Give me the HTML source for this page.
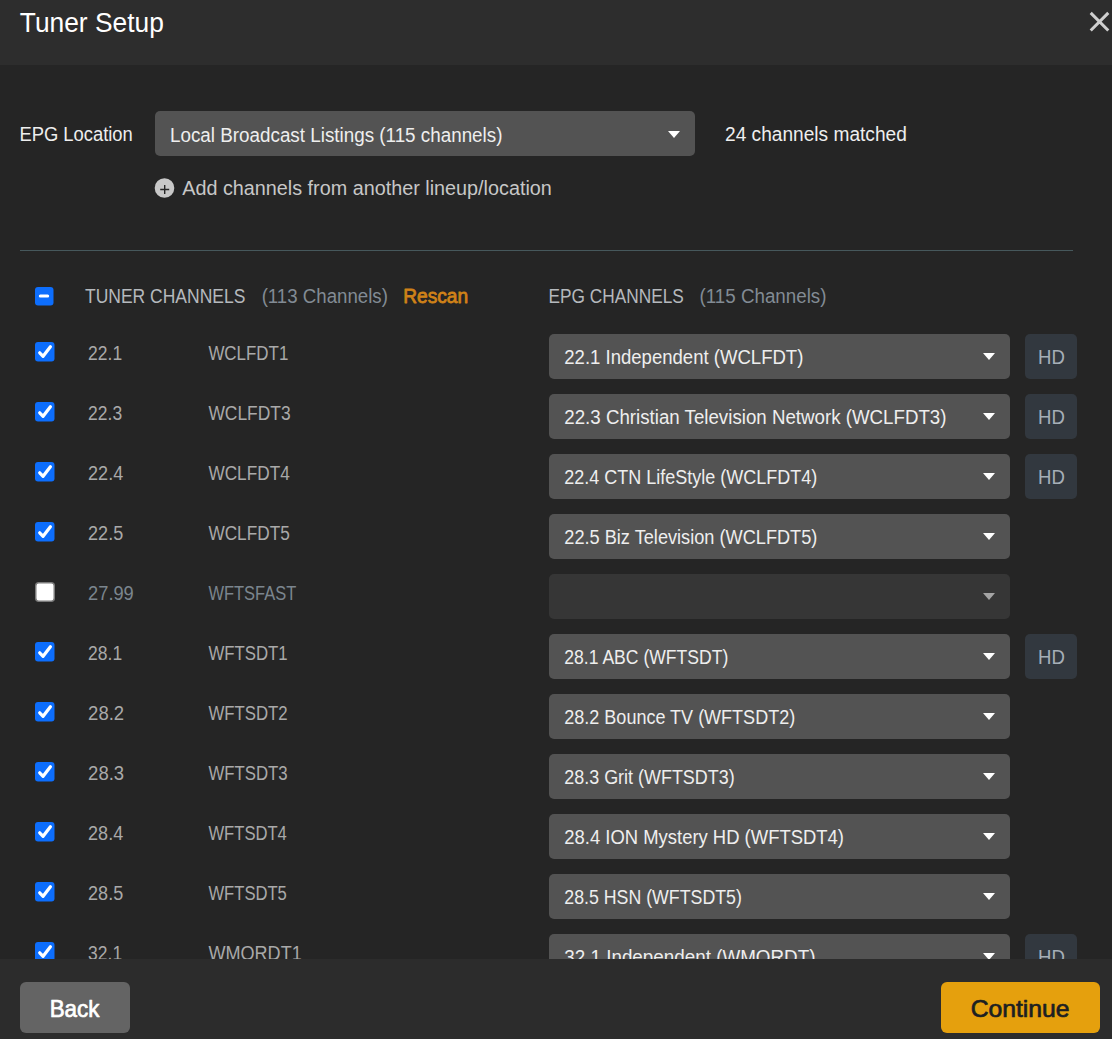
<!DOCTYPE html>
<html><head><meta charset="utf-8"><title>Tuner Setup</title>
<style>
html,body{margin:0;padding:0;background:#252525;width:1112px;height:1039px;overflow:hidden}
svg{display:block;font-family:"Liberation Sans",sans-serif}
</style></head><body>
<svg width="1112" height="1039" viewBox="0 0 1112 1039">
<defs><clipPath id="clipBody"><rect x="0" y="65" width="1112" height="894"/></clipPath></defs>
<rect x="0" y="0" width="1112" height="1039" fill="#252525"/>
<rect x="0" y="0" width="1112" height="65" fill="#2d2d2d"/>
<path d="M1090.7 12.9 L1108.3 30.5 M1108.3 12.9 L1090.7 30.5" stroke="#cfcfcf" stroke-width="3" stroke-linecap="butt"/>
<rect x="155" y="111" width="540" height="45" rx="5" fill="#535353"/>
<path d="M668 131 L680 131 L674 138 Z" fill="#ffffff"/>
<circle cx="164.5" cy="188" r="9.8" fill="#c8c8c8"/>
<path d="M160.2 189.5 H169.2 M164.7 185 V194" stroke="#252525" stroke-width="1.4"/>
<rect x="20" y="250" width="1053" height="1" fill="#46585c"/>
<rect x="35" y="287" width="18.5" height="18.5" rx="3" fill="#0d6efd"/>
<path d="M40.3 296 H47.7" stroke="#fff" stroke-width="3" stroke-linecap="round"/>
<g clip-path="url(#clipBody)">
<rect x="35" y="342" width="19.5" height="19.5" rx="3" fill="#0d6efd"/>
<path d="M39.7 352.8 L43.1 356.3 L50.4 346.7" fill="none" stroke="#fff" stroke-width="3.2" stroke-linecap="round" stroke-linejoin="round"/>
<rect x="549" y="334" width="461" height="45" rx="5" fill="#535353"/>
<path d="M983 353 L995 353 L989 360 Z" fill="#ffffff"/>
<rect x="1025" y="334" width="52" height="45" rx="5" fill="#32383f"/>
<rect x="35" y="402" width="19.5" height="19.5" rx="3" fill="#0d6efd"/>
<path d="M39.7 412.8 L43.1 416.3 L50.4 406.7" fill="none" stroke="#fff" stroke-width="3.2" stroke-linecap="round" stroke-linejoin="round"/>
<rect x="549" y="394" width="461" height="45" rx="5" fill="#535353"/>
<path d="M983 413 L995 413 L989 420 Z" fill="#ffffff"/>
<rect x="1025" y="394" width="52" height="45" rx="5" fill="#32383f"/>
<rect x="35" y="462" width="19.5" height="19.5" rx="3" fill="#0d6efd"/>
<path d="M39.7 472.8 L43.1 476.3 L50.4 466.7" fill="none" stroke="#fff" stroke-width="3.2" stroke-linecap="round" stroke-linejoin="round"/>
<rect x="549" y="454" width="461" height="45" rx="5" fill="#535353"/>
<path d="M983 473 L995 473 L989 480 Z" fill="#ffffff"/>
<rect x="1025" y="454" width="52" height="45" rx="5" fill="#32383f"/>
<rect x="35" y="522" width="19.5" height="19.5" rx="3" fill="#0d6efd"/>
<path d="M39.7 532.8 L43.1 536.3 L50.4 526.7" fill="none" stroke="#fff" stroke-width="3.2" stroke-linecap="round" stroke-linejoin="round"/>
<rect x="549" y="514" width="461" height="45" rx="5" fill="#535353"/>
<path d="M983 533 L995 533 L989 540 Z" fill="#ffffff"/>
<rect x="35.75" y="582.75" width="18.5" height="18.5" rx="3" fill="#ffffff" stroke="#7a7a7a" stroke-width="1.5"/>
<rect x="549" y="574" width="461" height="45" rx="5" fill="#363636"/>
<path d="M983 593 L995 593 L989 600 Z" fill="#a4a4a4"/>
<rect x="35" y="642" width="19.5" height="19.5" rx="3" fill="#0d6efd"/>
<path d="M39.7 652.8 L43.1 656.3 L50.4 646.7" fill="none" stroke="#fff" stroke-width="3.2" stroke-linecap="round" stroke-linejoin="round"/>
<rect x="549" y="634" width="461" height="45" rx="5" fill="#535353"/>
<path d="M983 653 L995 653 L989 660 Z" fill="#ffffff"/>
<rect x="1025" y="634" width="52" height="45" rx="5" fill="#32383f"/>
<rect x="35" y="702" width="19.5" height="19.5" rx="3" fill="#0d6efd"/>
<path d="M39.7 712.8 L43.1 716.3 L50.4 706.7" fill="none" stroke="#fff" stroke-width="3.2" stroke-linecap="round" stroke-linejoin="round"/>
<rect x="549" y="694" width="461" height="45" rx="5" fill="#535353"/>
<path d="M983 713 L995 713 L989 720 Z" fill="#ffffff"/>
<rect x="35" y="762" width="19.5" height="19.5" rx="3" fill="#0d6efd"/>
<path d="M39.7 772.8 L43.1 776.3 L50.4 766.7" fill="none" stroke="#fff" stroke-width="3.2" stroke-linecap="round" stroke-linejoin="round"/>
<rect x="549" y="754" width="461" height="45" rx="5" fill="#535353"/>
<path d="M983 773 L995 773 L989 780 Z" fill="#ffffff"/>
<rect x="35" y="822" width="19.5" height="19.5" rx="3" fill="#0d6efd"/>
<path d="M39.7 832.8 L43.1 836.3 L50.4 826.7" fill="none" stroke="#fff" stroke-width="3.2" stroke-linecap="round" stroke-linejoin="round"/>
<rect x="549" y="814" width="461" height="45" rx="5" fill="#535353"/>
<path d="M983 833 L995 833 L989 840 Z" fill="#ffffff"/>
<rect x="35" y="882" width="19.5" height="19.5" rx="3" fill="#0d6efd"/>
<path d="M39.7 892.8 L43.1 896.3 L50.4 886.7" fill="none" stroke="#fff" stroke-width="3.2" stroke-linecap="round" stroke-linejoin="round"/>
<rect x="549" y="874" width="461" height="45" rx="5" fill="#535353"/>
<path d="M983 893 L995 893 L989 900 Z" fill="#ffffff"/>
<rect x="35" y="942" width="19.5" height="19.5" rx="3" fill="#0d6efd"/>
<path d="M39.7 952.8 L43.1 956.3 L50.4 946.7" fill="none" stroke="#fff" stroke-width="3.2" stroke-linecap="round" stroke-linejoin="round"/>
<rect x="549" y="934" width="461" height="45" rx="5" fill="#535353"/>
<path d="M983 953 L995 953 L989 960 Z" fill="#ffffff"/>
<rect x="1025" y="934" width="52" height="45" rx="5" fill="#32383f"/>
<text x="88.10" y="360" font-size="19.5" font-weight="normal" fill="#a9a9a9" textLength="34.06" lengthAdjust="spacingAndGlyphs">22.1</text>
<text x="208.40" y="360" font-size="19.5" font-weight="normal" fill="#a9a9a9" textLength="79.93" lengthAdjust="spacingAndGlyphs">WCLFDT1</text>
<text x="564.30" y="364" font-size="19.5" font-weight="normal" fill="#eeeeee" textLength="239.07" lengthAdjust="spacingAndGlyphs">22.1 Independent (WCLFDT)</text>
<text x="1038.05" y="364" font-size="19.5" font-weight="normal" fill="#a6afb7" textLength="26.83" lengthAdjust="spacingAndGlyphs">HD</text>
<text x="88.10" y="420" font-size="19.5" font-weight="normal" fill="#a9a9a9" textLength="34.06" lengthAdjust="spacingAndGlyphs">22.3</text>
<text x="208.40" y="420" font-size="19.5" font-weight="normal" fill="#a9a9a9" textLength="82.25" lengthAdjust="spacingAndGlyphs">WCLFDT3</text>
<text x="564.30" y="424" font-size="19.5" font-weight="normal" fill="#eeeeee" textLength="382.17" lengthAdjust="spacingAndGlyphs">22.3 Christian Television Network (WCLFDT3)</text>
<text x="1038.05" y="424" font-size="19.5" font-weight="normal" fill="#a6afb7" textLength="26.83" lengthAdjust="spacingAndGlyphs">HD</text>
<text x="88.10" y="480" font-size="19.5" font-weight="normal" fill="#a9a9a9" textLength="35.06" lengthAdjust="spacingAndGlyphs">22.4</text>
<text x="208.40" y="480" font-size="19.5" font-weight="normal" fill="#a9a9a9" textLength="81.36" lengthAdjust="spacingAndGlyphs">WCLFDT4</text>
<text x="564.30" y="484" font-size="19.5" font-weight="normal" fill="#eeeeee" textLength="253.06" lengthAdjust="spacingAndGlyphs">22.4 CTN LifeStyle (WCLFDT4)</text>
<text x="1038.05" y="484" font-size="19.5" font-weight="normal" fill="#a6afb7" textLength="26.83" lengthAdjust="spacingAndGlyphs">HD</text>
<text x="88.10" y="540" font-size="19.5" font-weight="normal" fill="#a9a9a9" textLength="35.06" lengthAdjust="spacingAndGlyphs">22.5</text>
<text x="208.40" y="540" font-size="19.5" font-weight="normal" fill="#a9a9a9" textLength="81.36" lengthAdjust="spacingAndGlyphs">WCLFDT5</text>
<text x="564.30" y="544" font-size="19.5" font-weight="normal" fill="#eeeeee" textLength="253.06" lengthAdjust="spacingAndGlyphs">22.5 Biz Television (WCLFDT5)</text>
<text x="88.10" y="600" font-size="19.5" font-weight="normal" fill="#7b858e" textLength="45.69" lengthAdjust="spacingAndGlyphs">27.99</text>
<text x="208.40" y="600" font-size="19.5" font-weight="normal" fill="#7b858e" textLength="87.83" lengthAdjust="spacingAndGlyphs">WFTSFAST</text>
<text x="88.10" y="660" font-size="19.5" font-weight="normal" fill="#a9a9a9" textLength="34.06" lengthAdjust="spacingAndGlyphs">28.1</text>
<text x="208.40" y="660" font-size="19.5" font-weight="normal" fill="#a9a9a9" textLength="79.33" lengthAdjust="spacingAndGlyphs">WFTSDT1</text>
<text x="564.30" y="664" font-size="19.5" font-weight="normal" fill="#eeeeee" textLength="163.94" lengthAdjust="spacingAndGlyphs">28.1 ABC (WFTSDT)</text>
<text x="1038.05" y="664" font-size="19.5" font-weight="normal" fill="#a6afb7" textLength="26.83" lengthAdjust="spacingAndGlyphs">HD</text>
<text x="88.10" y="720" font-size="19.5" font-weight="normal" fill="#a9a9a9" textLength="36.00" lengthAdjust="spacingAndGlyphs">28.2</text>
<text x="208.40" y="720" font-size="19.5" font-weight="normal" fill="#a9a9a9" textLength="79.33" lengthAdjust="spacingAndGlyphs">WFTSDT2</text>
<text x="564.30" y="724" font-size="19.5" font-weight="normal" fill="#eeeeee" textLength="230.86" lengthAdjust="spacingAndGlyphs">28.2 Bounce TV (WFTSDT2)</text>
<text x="88.10" y="780" font-size="19.5" font-weight="normal" fill="#a9a9a9" textLength="36.00" lengthAdjust="spacingAndGlyphs">28.3</text>
<text x="208.40" y="780" font-size="19.5" font-weight="normal" fill="#a9a9a9" textLength="79.33" lengthAdjust="spacingAndGlyphs">WFTSDT3</text>
<text x="564.30" y="784" font-size="19.5" font-weight="normal" fill="#eeeeee" textLength="170.35" lengthAdjust="spacingAndGlyphs">28.3 Grit (WFTSDT3)</text>
<text x="88.10" y="840" font-size="19.5" font-weight="normal" fill="#a9a9a9" textLength="35.06" lengthAdjust="spacingAndGlyphs">28.4</text>
<text x="208.40" y="840" font-size="19.5" font-weight="normal" fill="#a9a9a9" textLength="78.47" lengthAdjust="spacingAndGlyphs">WFTSDT4</text>
<text x="564.30" y="844" font-size="19.5" font-weight="normal" fill="#eeeeee" textLength="279.67" lengthAdjust="spacingAndGlyphs">28.4 ION Mystery HD (WFTSDT4)</text>
<text x="88.10" y="900" font-size="19.5" font-weight="normal" fill="#a9a9a9" textLength="35.06" lengthAdjust="spacingAndGlyphs">28.5</text>
<text x="208.40" y="900" font-size="19.5" font-weight="normal" fill="#a9a9a9" textLength="78.47" lengthAdjust="spacingAndGlyphs">WFTSDT5</text>
<text x="564.30" y="904" font-size="19.5" font-weight="normal" fill="#eeeeee" textLength="177.55" lengthAdjust="spacingAndGlyphs">28.5 HSN (WFTSDT5)</text>
<text x="88.10" y="960" font-size="19.5" font-weight="normal" fill="#a9a9a9" textLength="34.06" lengthAdjust="spacingAndGlyphs">32.1</text>
<text x="208.40" y="960" font-size="19.5" font-weight="normal" fill="#a9a9a9" textLength="93.38" lengthAdjust="spacingAndGlyphs">WMORDT1</text>
<text x="564.30" y="964" font-size="19.5" font-weight="normal" fill="#eeeeee" textLength="251.18" lengthAdjust="spacingAndGlyphs">32.1 Independent (WMORDT)</text>
<text x="1038.05" y="964" font-size="19.5" font-weight="normal" fill="#a6afb7" textLength="26.83" lengthAdjust="spacingAndGlyphs">HD</text>
</g>
<text x="19.80" y="32" font-size="27" font-weight="normal" fill="#ffffff" textLength="143.99" lengthAdjust="spacingAndGlyphs">Tuner Setup</text>
<text x="19.46" y="141" font-size="19.5" font-weight="normal" fill="#eeeeee" textLength="113.34" lengthAdjust="spacingAndGlyphs">EPG Location</text>
<text x="170.03" y="142" font-size="19.5" font-weight="normal" fill="#eeeeee" textLength="332.44" lengthAdjust="spacingAndGlyphs">Local Broadcast Listings (115 channels)</text>
<text x="725.00" y="141" font-size="19.5" font-weight="normal" fill="#eeeeee" textLength="181.83" lengthAdjust="spacingAndGlyphs">24 channels matched</text>
<text x="182.20" y="195" font-size="19.5" font-weight="normal" fill="#c7c7c7" textLength="369.66" lengthAdjust="spacingAndGlyphs">Add channels from another lineup/location</text>
<text x="85.00" y="303" font-size="19.5" font-weight="normal" fill="#b5b9bd" textLength="160.31" lengthAdjust="spacingAndGlyphs">TUNER CHANNELS</text>
<text x="261.64" y="303" font-size="19.5" font-weight="normal" fill="#828b94" textLength="126.23" lengthAdjust="spacingAndGlyphs">(113 Channels)</text>
<text x="403.22" y="303" font-size="19.5" font-weight="normal" fill="#d08218" stroke="#d08218" stroke-width="0.8" stroke-linejoin="round" textLength="64.81" lengthAdjust="spacingAndGlyphs">Rescan</text>
<text x="548.51" y="303" font-size="19.5" font-weight="normal" fill="#b5b9bd" textLength="135.29" lengthAdjust="spacingAndGlyphs">EPG CHANNELS</text>
<text x="699.54" y="303" font-size="19.5" font-weight="normal" fill="#828b94" textLength="126.94" lengthAdjust="spacingAndGlyphs">(115 Channels)</text>
<rect x="0" y="959" width="1112" height="80" fill="#2c2c2c"/>
<rect x="20" y="982" width="110" height="51" rx="6" fill="#646464"/>
<rect x="941" y="982" width="159" height="51" rx="6" fill="#e5a00d"/>
<text x="49.67" y="1017" font-size="24" font-weight="normal" fill="#ffffff" stroke="#ffffff" stroke-width="0.7" stroke-linejoin="round" textLength="49.80" lengthAdjust="spacingAndGlyphs">Back</text>
<text x="970.67" y="1017" font-size="24" font-weight="normal" fill="#1c1f22" stroke="#1c1f22" stroke-width="0.7" stroke-linejoin="round" textLength="98.79" lengthAdjust="spacingAndGlyphs">Continue</text>
</svg>
</body></html>
